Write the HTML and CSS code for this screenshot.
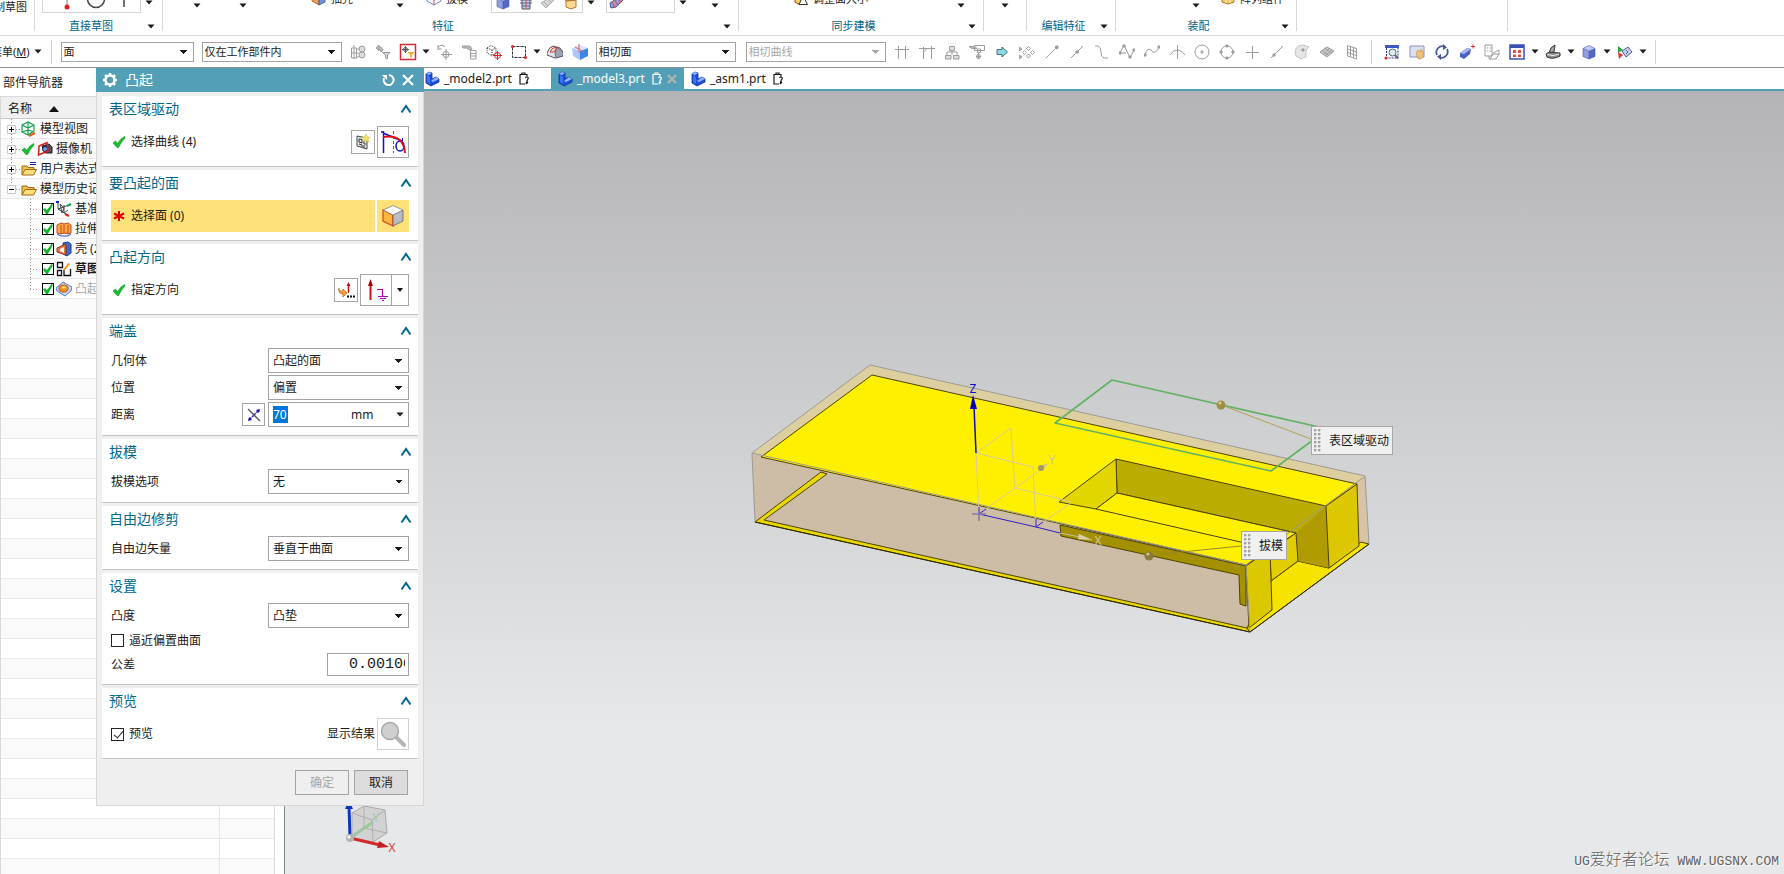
FILE: index.html
```
<!DOCTYPE html>
<html lang="zh-CN">
<head>
  <meta charset="UTF-8">
  <meta name="viewport" content="width=device-width, initial-scale=1.0">
  <title>_model3.prt</title>
  <link rel="stylesheet" href="styles.css">
</head>
<body>

  <!-- shared icons -->
  <svg class="sprite" aria-hidden="true">
    <symbol id="i-tick" viewBox="0 0 14 14"><path d="M1 8 L3.500 6 L5.500 8.500 Q8.500 3.500 12.500 1.500 L13 3 Q9 7 6.500 12.500 L5 12.500 Z" fill="#17c02c" stroke="#0b8a1d" stroke-width=".6"/></symbol>
    <symbol id="i-caret" viewBox="0 0 8 5"><path d="M0.500 0.500 H7.500 L4 4.500 Z" fill="#1a1a1a"/></symbol>
    <symbol id="i-chev" viewBox="0 0 12 10"><path d="M1.500 8.500 L6 2 L10.500 8.500" fill="none" stroke="#00668a" stroke-width="2"/></symbol>
    <symbol id="i-part" viewBox="0 0 16 16"><path d="M2 3 L5 1 L8 2 V8 L12 6 L15 8 V11 L7 15 L2 12 Z" fill="#1c50d8" stroke="#0b2b9a" stroke-width=".8"/><path d="M2 3 L5 1 L8 2 L5 4 Z M7 10 L12 6 L15 8 L9 11 Z" fill="#8db4ff"/><path d="M3 4 V11 L6 13 V6 Z" fill="#3a74f4"/></symbol>
    <symbol id="i-doc" viewBox="0 0 12 14"><path d="M9 4 V2.500 H2 V12 H7 M4 2.500 V1 H7 V2.500 M7.500 6 Q8 4.500 9.500 5 Q11 6 9.500 7.500 L8 12 M8 12 L10 10" fill="none" stroke="currentColor" stroke-width="1.200"/></symbol>
    <symbol id="i-cube" viewBox="0 0 16 16"><path d="M2 4.500 L8 7 V15 L2 12.500 Z" fill="#8f9fe0"/><path d="M8 7 L14 4.500 V12.500 L8 15 Z" fill="#5468c4"/><path d="M2 4.500 L8 1.500 L14 4.500 L8 7 Z" fill="#c3ccf6"/><path d="M2 4.500 L8 1.500 L14 4.500 V12.500 L8 15 L2 12.500 Z M2 4.500 L8 7 L14 4.500 M8 7 V15" fill="none" stroke="#4656a8" stroke-width=".6"/></symbol>
    <symbol id="i-folder" viewBox="0 0 16 16"><path d="M1 14 V5 H6 L7 6.500 H13 V9" fill="#f2c14a" stroke="#9b6a12"/><path d="M1 14 L4 8.500 H15.500 L12.500 14 Z" fill="#ffdf7a" stroke="#9b6a12"/></symbol>
    <symbol id="i-plus" viewBox="0 0 20 20"><path d="M10.500 0 V20 M15 10.500 H20" stroke="#999" stroke-dasharray="1 2"/><path d="M6.500 6.500 H14.500 V14.500 H6.500 Z" fill="#fff" stroke="#c8c8c8"/><path d="M8 10.500 H13 M10.500 8 V13" stroke="#000"/></symbol>
    <symbol id="i-minus" viewBox="0 0 20 20"><path d="M10.500 0 V6 M15 10.500 H20" stroke="#999" stroke-dasharray="1 2"/><path d="M6.500 6.500 H14.500 V14.500 H6.500 Z" fill="#fff" stroke="#c8c8c8"/><path d="M8 10.500 H13" stroke="#000"/></symbol>
    <symbol id="i-branch" viewBox="0 0 12 20"><path d="M.5 0 V20 M0 10.500 H9" stroke="#999" stroke-dasharray="1 2"/></symbol>
    <symbol id="i-branch-end" viewBox="0 0 12 20"><path d="M.5 0 V10 M0 10.500 H9" stroke="#999" stroke-dasharray="1 2"/></symbol>
  </svg>

  <header class="ribbon">
    <section class="group group-sketch">
      <button class="sketch-btn">绘制草图</button>
    </section>
    <section class="group group-direct">
      <div class="tools">
        <div class="gallery">
          <button aria-label="点"><svg width="16" height="16"><path d="M8 0 V12" stroke="#777"/><circle cx="8" cy="12" r="2.500" fill="#e02020"/></svg></button>
          <button aria-label="圆"><svg width="24" height="24"><circle cx="12" cy="12" r="8.500" fill="none" stroke="#444" stroke-width="1.500"/></svg></button>
          <button aria-label="十字"><svg width="16" height="16"><path d="M8 0 V12 M0 4 H16" stroke="#444" stroke-width="1.500"/></svg></button>
        </div>
        <button class="drop" aria-label="更多曲线"><svg width="8" height="5"><use href="#i-caret"/></svg></button>
      </div>
      <div class="group-name"><span>直接草图</span><svg width="8" height="5"><use href="#i-caret"/></svg></div>
    </section>
    <section class="group group-feature">
      <div class="tools">
        <button class="drop low" aria-label="下拉"><svg width="8" height="5"><use href="#i-caret"/></svg></button>
        <button class="drop low" aria-label="下拉"><svg width="8" height="5"><use href="#i-caret"/></svg></button>
        <button class="tool"><svg width="16" height="16"><path d="M1 7 L8 4 V15 L1 11 Z" fill="#f0a050" stroke="#8a4a1a" stroke-width=".7"/><path d="M8 3 L14 2 V12 L8 15 Z" fill="#6f8fe0" stroke="#334a90" stroke-width=".7"/></svg>抽壳</button>
        <button class="drop low" aria-label="下拉"><svg width="8" height="5"><use href="#i-caret"/></svg></button>
        <button class="tool"><svg width="16" height="16"><path d="M1 4 V11 L8 15 L15 11 V4" fill="#f6f6ff" stroke="#6a8ad8"/><path d="M8 6 V15 M8 6 L1 3 M8 6 L15 3" fill="none" stroke="#d05050"/></svg>拔模</button>
        <div class="gallery">
          <button aria-label="特征 1"><svg width="16" height="16"><use href="#i-cube"/></svg></button>
          <button aria-label="特征 2"><svg width="16" height="16"><path d="M4 1 H12 V15 H4 Z" fill="#c8cce0" stroke="#556"/><path d="M2 6 H14 M2 9 H14 M4 12 H12" stroke="#55608c"/><path d="M8 1 V15" stroke="#d44"/></svg></button>
          <button aria-label="特征 3"><svg width="16" height="16"><path d="M1 9 L12 2 L15 5 L6 14 Z" fill="#d4d4d4" stroke="#aaa"/><path d="M4 8 L8 12 M8 5 L12 9" stroke="#aaa"/></svg></button>
          <button aria-label="特征 4"><svg width="16" height="16"><path d="M3 7 L13 6 V13 L8 15 L3 13 Z" fill="#ffd890" stroke="#a9742a"/><path d="M3 7 L1 4 L8 3 L15 3 L13 6 Z" fill="#f2b44c" stroke="#a9742a"/></svg></button>
        </div>
        <button class="drop" aria-label="更多特征"><svg width="8" height="5"><use href="#i-caret"/></svg></button>
        <div class="gallery gallery-start">
          <button aria-label="阵列"><svg width="16" height="16"><path d="M1 9 L10 3 L15 5 L7 13 L2 14 Z" fill="#8fa4e6" stroke="#3d51a0"/><path d="M3 8 L6 14 M6 6 L9 12 M9 4 L12 9" stroke="#d05a5a" stroke-width="1.500"/></svg></button>
        </div>
        <button class="drop" aria-label="更多阵列"><svg width="8" height="5"><use href="#i-caret"/></svg></button>
        <button class="drop low" aria-label="下拉"><svg width="8" height="5"><use href="#i-caret"/></svg></button>
      </div>
      <div class="group-name"><span>特征</span><svg width="8" height="5"><use href="#i-caret"/></svg></div>
    </section>
    <section class="group group-sync">
      <div class="tools">
        <button class="tool"><svg width="16" height="16"><path d="M2 2 H8 V14 H5 L2 12 Z" fill="#ffd54a" stroke="#b03030"/><path d="M10 6 L14.500 14.500 H6 Z" fill="#fff" stroke="#333"/></svg>调整面大小</button>
        <button class="drop low" aria-label="下拉"><svg width="8" height="5"><use href="#i-caret"/></svg></button>
      </div>
      <div class="group-name"><span>同步建模</span><svg width="8" height="5"><use href="#i-caret"/></svg></div>
    </section>
    <section class="group group-more">
      <div class="tools">
        <button class="drop low" aria-label="更多"><svg width="8" height="5"><use href="#i-caret"/></svg></button>
      </div>
    </section>
    <section class="group group-edit">
      <div class="tools"></div>
      <div class="group-name"><span>编辑特征</span><svg width="8" height="5"><use href="#i-caret"/></svg></div>
    </section>
    <section class="group group-asm">
      <div class="tools">
        <button class="drop low" aria-label="下拉"><svg width="8" height="5"><use href="#i-caret"/></svg></button>
        <button class="tool"><svg width="16" height="16"><path d="M2 5 L8 2 L14 5 V12 L8 14 L2 12 Z" fill="#f4c862" stroke="#a9742a"/><path d="M6 3 V13 M10 3 V13 M2 8 H14" stroke="#fff3cf"/></svg>阵列组件</button>
      </div>
      <div class="group-name"><span>装配</span><svg width="8" height="5"><use href="#i-caret"/></svg></div>
    </section>
    <section class="group group-blank"></section>
  </header>

  <nav class="toolbar" aria-label="选择条">
    <button class="menu-btn">菜单(<u>M</u>)<svg width="8" height="5"><use href="#i-caret"/></svg></button>
    <span class="sep"></span>
    <select class="bar-select type-filter" aria-label="类型过滤器"><option>面</option></select>
    <select class="bar-select" aria-label="选择范围"><option>仅在工作部件内</option></select>
    <div class="icon-run left-run">
      <button aria-label="选择组"><svg width="16" height="16" class="grey"><path d="M1.500 4 H6.500 V14 H1.500 Z M4 1 V15 M1.500 9 H9 M6.500 5 H9 M6.500 13 H9"/><circle cx="12" cy="5" r="3" fill="#ddd"/><circle cx="12" cy="11" r="3" fill="#ddd"/></svg></button>
      <button aria-label="重置过滤器"><svg width="16" height="16" class="grey"><path d="M1 4 L4 1 V3 H6 L8 6 L6 8 L5 5 H4 V7 Z" fill="#bbb"/><path d="M7.500 8.500 H15 L12.500 11 V15 L10.500 14 V11 Z" fill="#d5d5d5"/></svg></button>
      <button aria-label="常规过滤器"><svg width="18" height="18"><path d="M1.500 1.500 H16.500 V16.500 H1.500 Z" fill="#fff" stroke="#cf2b3b" stroke-width="1.500"/><path d="M3 6.500 H10 M6.500 3 V10" stroke="#555"/><circle cx="6.500" cy="6.500" r="2" fill="none" stroke="#555"/><path d="M8.500 9 H15.500 L13 12 V15 L11 14 V12 Z" fill="#f4b02c"/></svg></button>
      <button class="narrow" aria-label="下拉"><svg width="8" height="5"><use href="#i-caret"/></svg></button>
      <button aria-label="撤销选择"><svg width="16" height="16" class="grey"><path d="M2 6 V1 M2 5 H6 M2 4 Q5 -1 9 3 M10 5 V16 M5 10.500 H16"/><circle cx="10" cy="10.500" r="3"/></svg></button>
      <button aria-label="选择链"><svg width="16" height="16" class="grey"><path d="M1 2 H9 L11 5 L8 6 L6 4 H2 Z" fill="#bbb"/><path d="M9.500 6.500 H15 V15 H9.500 Z M9.500 9.500 H15 M9.500 12 H15"/></svg></button>
      <button aria-label="选择对象"><svg width="16" height="16" fill="none"><path d="M1 4 L5 1.500 L10 4 V9 L6 12 L1 9 Z M1 4 L6 6 L10 4 M6 6 V11" stroke="#333" stroke-dasharray="1 1"/><circle cx="11.500" cy="11.500" r="3" stroke="#d22"/><path d="M7 11.500 H16 M11.500 7 V16" stroke="#d22"/></svg></button>
      <button aria-label="矩形选择"><svg width="16" height="16" fill="none"><path d="M1.500 2.500 H14.500 V13.500 H1.500 Z" stroke="#333" stroke-dasharray="3 1"/><circle cx="1.500" cy="2.500" r="1.500" fill="#d22"/><circle cx="14.500" cy="13.500" r="1.500" fill="#d22"/></svg></button>
      <button class="narrow" aria-label="下拉"><svg width="8" height="5"><use href="#i-caret"/></svg></button>
      <button aria-label="面规则"><svg width="16" height="16"><path d="M0 9 Q2 3 6 2 L13 4 L16 8 V12 L8 14 L0 11 Z" fill="#e2e4ea" stroke="#555"/><path d="M10 3 L16 8 V12 L9 14 L8 9 Z" fill="#9aa3b4" stroke="#667"/><path d="M3 8 L6 4 L10 3.500 L7 8 Z" fill="none" stroke="#d33"/></svg></button>
      <button aria-label="实体"><svg width="16" height="16"><path d="M0 4 L8 7 V16 L1 12 Z" fill="#a9c6ff"/><path d="M8 7 L16 4 V12 L8 16 Z" fill="#3c86e8"/><path d="M0 4 L8 1 L16 4 L8 7 Z" fill="#d3e2ff"/><path d="M7 0 V9 M3 3 L12 8" stroke="#e05a6a"/></svg></button>
    </div>
    <select class="bar-select" aria-label="面规则"><option>相切面</option></select>
    <select class="bar-select rule-curve" aria-label="曲线规则" disabled><option>相切曲线</option></select>
    <div class="icon-run">
      <button aria-label="在相交处停止"><svg width="16" height="16" class="grey"><path d="M4.500 2 V15 M11.500 2 V15 M1 5.500 H15"/></svg></button>
      <button aria-label="跟随圆角"><svg width="16" height="16" class="grey"><path d="M4.500 3 V15 M12.500 2 V15 M0 4.500 H16 M4.500 8 L8 4.500"/></svg></button>
      <button aria-label="特征链"><svg width="16" height="16" class="grey"><path d="M5.500 2.500 H10.500 V6.500 H5.500 Z M3 8 H13 M8 6.500 V11 M1.500 11.500 H7 V15 H1.500 Z M9.500 11.500 H15 V15 H9.500 Z M3 8 V11 M13 8 V11" fill="#ddd"/></svg></button>
      <button aria-label="路径选择"><svg width="16" height="16" class="grey"><path d="M0 2.500 H6 L8 4.500 H3 Z" fill="#bbb"/><path d="M5.500 1.500 H15.500 V6.500 H5.500 Z M8.500 5 H11.500 V8.500 H8.500 Z M9.500 8 V15 M7 12.500 H12"/><circle cx="9.500" cy="12.500" r="2"/></svg></button>
      <button aria-label="前进"><svg width="16" height="16"><path d="M3 5.500 H8 V3 L13.500 8 L8 13 V10.500 H3 Z" fill="#8fd8e0" stroke="#3e7482"/></svg></button>
      <button aria-label="捕捉点"><svg width="16" height="16" class="grey"><path d="M0 3 L3 5 L0 7 Z M0 11 L3 13 L0 15 Z" fill="#bbb"/><path d="M9.500 2.500 L11.500 4.500 L9.500 6.500 L7.500 4.500 Z M9.500 10 L11.500 12 L9.500 14 L7.500 12 Z M13.500 6.500 L15.500 8.500 L13.500 10.500 L11.500 8.500 Z M5.500 6.500 L7.500 8.500 L5.500 10.500 L3.500 8.500 Z"/></svg></button>
      <button aria-label="端点"><svg width="16" height="16" class="grey"><path d="M2 14 L13 3"/><path d="M11.500 2 H14 V4.500 H11.500 Z" fill="#999"/></svg></button>
      <button aria-label="中点"><svg width="16" height="16" class="grey"><path d="M2 14 L14 2"/><path d="M7 7 H9.500 V9 H7 Z" fill="#999"/></svg></button>
      <button aria-label="控制点"><svg width="16" height="16" class="grey"><path d="M1 2 H4 Q7 3 7 8 Q7 13 10 14 H14"/></svg></button>
      <button aria-label="极点"><svg width="16" height="16" class="grey"><path d="M1 9 L5 1 L11 14 L15 6 M1 9 H7"/><path d="M4 1 H6 V3 H4 Z M0 8 H2 V10 H0 Z M10 12 H12 V14 H10 Z M14 5 H16 V7 H14 Z" fill="#999"/></svg></button>
      <button aria-label="样条"><svg width="16" height="16" class="grey"><path d="M1 11 Q3 3 7 6 Q11 12 15 3"/><path d="M0 10 H2 V12 H0 Z M14 2 H16 V4 H14 Z" fill="#999"/></svg></button>
      <button aria-label="交点"><svg width="16" height="16" class="grey"><path d="M8.500 1 V15 M1 11 Q4 6 8.500 6 Q13 6 16 11"/></svg></button>
      <button aria-label="圆心"><svg width="16" height="16" class="grey"><circle cx="8" cy="8" r="7"/><path d="M6 8 H10 M8 6 V10"/></svg></button>
      <button aria-label="象限点"><svg width="16" height="16" class="grey"><circle cx="8" cy="8" r="6"/><path d="M7 1 H9 V3 H7 Z M7 13 H9 V15 H7 Z M1 7 H3 V9 H1 Z M13 7 H15 V9 H13 Z" fill="#aaa"/></svg></button>
      <button aria-label="现有点"><svg width="16" height="16" class="grey"><path d="M8.500 2 V15 M2 8.500 H15"/></svg></button>
      <button aria-label="曲线上的点"><svg width="16" height="16" class="grey"><path d="M2 14 L14 2"/><path d="M4 10 H6 V12 H4 Z" fill="#999"/></svg></button>
      <button aria-label="面上的点"><svg width="16" height="16" class="grey"><path d="M1 8 Q2 1 9 1 L15 3 Q11 6 12 13 Q9 13 8 15 L2 12 Z" fill="#e6e6e6" stroke="#c4c4c4"/><path d="M8 5 H10 V7 H8 Z" fill="#999"/></svg></button>
      <button aria-label="有界栅格"><svg width="16" height="16" class="grey"><path d="M1 8 L8 3 L15 7 L8 13 Z M3 6 L10 12 M5 4 L13 9 M4 11 L11 4 M6 12 L13 6" fill="#ccc"/></svg></button>
      <button aria-label="栅格"><svg width="16" height="16" class="grey"><path d="M3.500 1.500 L12.500 4.500 V15 L3.500 12 Z M6.500 3 V13 M9.500 4 V14 M3.500 5 L12.500 8 M3.500 8.500 L12.500 11.500"/></svg></button>
    </div>
    <span class="sep"></span>
    <div class="icon-run">
      <button aria-label="适合窗口"><svg width="16" height="16" fill="none"><path d="M1 1 H15 V4 H1 Z" fill="#3a56c8"/><path d="M2.500 4 V14 H14 V4" stroke="#2a3ba0" stroke-dasharray="2 1"/><circle cx="8.500" cy="8.500" r="3.500" fill="#dceef6" stroke="#667"/><path d="M11 11 L14 14.500" stroke="#667" stroke-width="2"/><circle cx="2" cy="14" r="1.500" fill="#d22"/></svg></button>
      <button aria-label="平移"><svg width="16" height="16"><path d="M1 2 H15 V13 H1 Z" fill="#d8e0f4" stroke="#8894b8"/><path d="M7 9 L9 6 L11 8 L12 5 L14 8 L15 12 L12 15 H9 Z" fill="#f0bf74" stroke="#b4813c" stroke-width=".5"/></svg></button>
      <button aria-label="旋转"><svg width="16" height="16" fill="none"><path d="M3 11 A6 6 0 0 1 10 2.500 M13 5 A6 6 0 0 1 6 13.500" stroke="#445a9a" stroke-width="1.800"/><path d="M9 0 L13 3.500 L9 6 Z M7 10 L3 12.500 L7 16 Z" fill="#445a9a"/></svg></button>
      <button aria-label="透视"><svg width="16" height="16"><path d="M1 9 L8 4 L12 5 L11 10 L5 15 L1 13 Z" fill="#4a62c4"/><path d="M1 9 L8 4 L12 5 L5 10 Z" fill="#aab8f0"/><path d="M12 2.500 H16 M14 .5 V4.500" stroke="#d33"/></svg></button>
      <button aria-label="替换视图"><svg width="16" height="16" class="grey"><path d="M1 1 H8 V12 H1 Z M3 4 H4 M5.500 4 H7 M3 7 H4 M5.500 7 H7 M5 12 V15 H12 L15 10 H9 L6 15 M9 9 L15 6 V10" /></svg></button>
      <button aria-label="布局"><svg width="16" height="16"><path d="M1 1 H15 V15 H1 Z" fill="#fff" stroke="#3a50b8" stroke-width="1.500"/><path d="M1 1 H15 V4 H1 Z" fill="#3a50b8"/><path d="M4 6 H7 V9 H4 Z M9 6 H12 V9 H9 Z M4 10.500 H7 V13 H4 Z M9 10.500 H12 V13 H9 Z" fill="#e64b3c"/></svg></button>
      <button class="narrow" aria-label="下拉"><svg width="8" height="5"><use href="#i-caret"/></svg></button>
      <button aria-label="渲染样式"><svg width="16" height="16"><path d="M4 9 Q5 3 10 1 L9 8 Z" fill="#aaa" stroke="#333"/><path d="M1 10 Q4 7 8 8.500 L15 9 V12 Q8 16 2 13 Z" fill="#8c8c8c" stroke="#333"/><path d="M2 10.500 Q8 13 14 10" fill="none" stroke="#eee"/></svg></button>
      <button class="narrow" aria-label="下拉"><svg width="8" height="5"><use href="#i-caret"/></svg></button>
      <button aria-label="定向视图"><svg width="16" height="16"><use href="#i-cube"/></svg></button>
      <button class="narrow" aria-label="下拉"><svg width="8" height="5"><use href="#i-caret"/></svg></button>
      <button aria-label="编辑截面"><svg width="16" height="16"><path d="M1 2 L6 6 L1 9 Z" fill="#26a83a"/><path d="M1 8 L6 11 L2 15 Z" fill="#d33"/><path d="M5 7 L11 3 L15 8 L9 13 Z" fill="#c4cef0" stroke="#55608c"/><path d="M9 6 L11 8 L9 10" fill="none" stroke="#55608c"/></svg></button>
      <button class="narrow" aria-label="下拉"><svg width="8" height="5"><use href="#i-caret"/></svg></button>
    </div>
    <span class="sep"></span>
  </nav>

  <main class="workspace">
    <aside class="navigator">
      <h2>部件导航器</h2>
      <div class="tree">
        <div class="tree-head"><span>名称</span><svg width="10" height="6"><path d="M0 6 L5 0 L10 6 Z" fill="#111"/></svg></div>
        <ul class="tree-rows">
          <li><svg width="20" height="20"><use href="#i-plus"/></svg><svg width="16" height="16" fill="none"><path d="M1 4 L7 1 L13 4 V10 L7 14 L1 11 Z M1 4 L7 7 L13 4 M7 7 V14 M7 1 V9 L1 11 M7 9 L13 11" stroke="#12a04a" stroke-width="1.200"/><path d="M8 15 L14 12" stroke="#e8541c" stroke-width="2"/></svg><span>模型视图</span></li>
          <li><svg width="20" height="20"><use href="#i-plus"/></svg><svg width="14" height="14"><use href="#i-tick"/></svg><svg width="16" height="16"><path d="M5 5 L12 3 L15 6 V12 L8 12 Z" fill="#4b4b6a" stroke="#222"/><circle cx="8" cy="8" r="2.500" fill="#7a9be8" stroke="#113"/><path d="M2 5 L10 1.500 L11 10 L1.500 14 Z" fill="none" stroke="#d8201c" stroke-width="1.500"/></svg><span>摄像机</span></li>
          <li><svg width="20" height="20"><use href="#i-plus"/></svg><svg width="16" height="16"><use href="#i-folder"/><path d="M9 1.500 H15 M9 3.500 H15" stroke="#20209a"/></svg><span>用户表达式</span></li>
          <li><svg width="20" height="20"><use href="#i-minus"/></svg><svg width="16" height="16"><use href="#i-folder"/></svg><span>模型历史记录</span></li>
          <li class="child"><svg width="12" height="20"><use href="#i-branch"/></svg><input type="checkbox" checked aria-label="基准坐标系"><svg width="16" height="16" fill="none"><path d="M2 1 V8 L10 13 M2 8 L13 4 M4 3 L8 7 L6 12 Z M8 4 V12 L12 9" stroke="#444"/><path d="M11 5 L15 3" stroke="#0a4" stroke-width="2"/><path d="M9 13 L13 15" stroke="#d22" stroke-width="2"/><path d="M0 1 H3" stroke="#22c" stroke-width="2"/></svg><span>基准坐标系</span></li>
          <li class="child"><svg width="12" height="20"><use href="#i-branch"/></svg><input type="checkbox" checked aria-label="拉伸"><svg width="16" height="16"><path d="M1 4 L5 2 L8 3 L12 2 L15 4 V12 L12 13 L8 12 L5 13 L1 12 Z" fill="#ffa64c" stroke="#c44a12"/><path d="M5 4 V13 M8 4 V12 M12 4 V13" stroke="#c44a12"/><path d="M1 13 L5 15 H12 L15 13" fill="none" stroke="#2a50c0"/></svg><span>拉伸</span></li>
          <li class="child"><svg width="12" height="20"><use href="#i-branch"/></svg><input type="checkbox" checked aria-label="壳"><svg width="16" height="16"><path d="M7 2 L12 1 L15 3 V12 L11 15 L7 13 Z" fill="#3d6ad0" stroke="#1c3a8c"/><path d="M1 7 L10 3 V14 L1 11 Z" fill="#e07840" stroke="#8a3510"/><path d="M4 8 L8 6 V12 L4 10 Z" fill="#fff"/></svg><span>壳 (2)</span></li>
          <li class="child strong"><svg width="12" height="20"><use href="#i-branch"/></svg><input type="checkbox" checked aria-label="草图"><svg width="16" height="16" fill="none"><path d="M1.500 1.500 H6.500 V6.500 H1.500 Z M1.500 9.500 H5.500 V14.500 H1.500 Z M8 9 V14.500 H14.500 V8" stroke="#111" stroke-width="1.300"/><path d="M8 9 L13 2.500" stroke="#e89a20" stroke-width="2"/></svg><span>草图 (3)</span></li>
          <li class="child faded"><svg width="12" height="20"><use href="#i-branch-end"/></svg><input type="checkbox" checked aria-label="凸起"><svg width="16" height="16"><path d="M0 7 L7 1 L16 6 L15 10 L9 15 L1 10 Z" fill="#c3d4f5" stroke="#5a7fc8"/><ellipse cx="7.500" cy="7.500" rx="4.500" ry="3.500" fill="#f7901e" stroke="#c8560c"/><ellipse cx="8" cy="6.500" rx="2" ry="1" fill="#ffe39a"/></svg><span>凸起</span></li>
        </ul>
      </div>
    </aside>

    <section class="view">
      <div class="tabs">
        <a class="tab" href="#"><svg width="16" height="16"><use href="#i-part"/></svg><span>_model2.prt</span><svg width="12" height="14"><use href="#i-doc"/></svg></a>
        <a class="tab active" href="#"><svg width="16" height="16"><use href="#i-part"/></svg><span>_model3.prt</span><svg width="12" height="14"><use href="#i-doc"/></svg><svg width="10" height="10"><path d="M1 1 L9 9 M9 1 L1 9" stroke="#b9b2ac" stroke-width="2"/></svg></a>
        <a class="tab" href="#"><svg width="16" height="16"><use href="#i-part"/></svg><span>_asm1.prt</span><svg width="12" height="14"><use href="#i-doc"/></svg></a>
      </div>

      <div class="canvas">
        <svg class="scene" role="img" aria-label="模型">
          <g transform="translate(-285 -91)" stroke-linejoin="round">
            <!-- translucent blank -->
            <path d="M870 365 L1365 476 L1246 565 L752 453 Z" fill="#ddcf9f"/>
            <path d="M752 453 L1246 565 L1250 632 L755 522 Z" fill="#cdbda7"/>
            <path d="M1365 476 L1369 544 L1250 632 L1246 565 Z" fill="#d8c3a6"/>
            <!-- base plate -->
            <g stroke="#4d4300" stroke-width="1">
              <path d="M755 522 L821 472 L827 474 L764 520 L1247 628 L1250 632 Z" fill="#ead900"/>
              <path d="M1271 581 L1298 561 L1329 568 L1361 542 L1369 544 L1250 632 L1247 628 Z" fill="#f6e300"/>
              <path d="M1060 525 L1246 566 V606 L1240 604 L1239 575 L1061 536 Z" fill="#a39100"/>
              <!-- top face -->
              <path d="M872 375 L1357 484 L1326 506 L1296 533 L1246 565 L761 457 Z" fill="#fff000"/>
              <!-- pocket -->
              <path d="M1116 459 L1326 506 L1329 568 L1298 561 L1296 533 L1117 493 Z" fill="#baac00"/>
              <path d="M1326 506 L1329 568 L1298 561 L1296 533 Z" fill="#b09c00" stroke="none"/>
              <path d="M1116 459 L1117 493 L1096 509 L1059 502 Z" fill="#e3d500"/>
              <path d="M1117 493 L1296 533 L1281 543 L1258 546 L1096 509 Z" fill="#fff000"/>
              <path d="M1326 506 L1357 484 L1359 546 L1329 568 Z" fill="#dcc700"/>
              <path d="M1270 551 L1296 533 L1298 561 L1271 581 Z" fill="#e1cd00"/>
              <path d="M1246 566 L1270 549 L1272 610 L1249 628 Z" fill="#dcc800"/>
            </g>
            <g fill="none" stroke="#9c9a94" stroke-width="1">
              <path d="M870 365 L1365 476 L1369 544 M1365 476 L1246 565 L752 453 L870 365 M752 453 L755 522 M1246 565 L1250 632"/>
            </g>
            <path d="M755 522 L1250 632 L1369 544" fill="none" stroke="#2d2800"/>
            <!-- datum csys -->
            <g fill="none" stroke="#d8ca98">
              <path d="M976 453 L1011 428 L1015 488 L979 514 Z M976 453 L1033 467 L1036 527 M1015 488 L1072 502 L1036 527 M1015 488 L1040 470"/>
            </g>
            <path d="M979 507 V514 L1036 527 L1060 533 M979 514 L986 509 M1036 519 V527 L1043 522" fill="none" stroke="#2a20c8"/>
            <path d="M972 514 H986 M979 507 V521" stroke="#8277a8" stroke-width="1.500"/>
            <path d="M976 453 L974 406" stroke="#0a0ad0" stroke-width="1.500"/>
            <path d="M973 395 L977 409 L970 409 Z" fill="#0000c8"/>
            <path d="M1060 533 L1080 537" stroke="#c9bf9a"/>
            <path d="M1079 534 L1092 540 L1078 539 Z" fill="#ddd0a8" stroke="#c7b98c" stroke-width=".5"/>
            <path d="M1039 466 L1049 463 L1043 470 Z" fill="#d0c494"/>
            <circle cx="1041" cy="468" r="3" fill="#a89860"/>
            <text x="973" y="393" class="axis axis-z">Z</text>
            <text x="1052" y="464" class="axis axis-y">Y</text>
            <text x="1098" y="545" class="axis axis-x">X</text>
            <!-- section curves and handles -->
            <path d="M1112 380 L1328 429 L1271 471 L1055 423 Z" fill="none" stroke="#62b262" stroke-width="1.700"/>
            <path d="M1224 406 L1311 439" stroke="#b59f5a"/>
            <path d="M1152 555 L1241 546" stroke="#9a8a28"/>
            <circle cx="1221" cy="405" r="4.500" fill="#a28c42"/>
            <circle cx="1220" cy="403" r="1.500" fill="#dccd92"/>
            <circle cx="1149" cy="556" r="4.500" fill="#8c7a3a"/>
            <circle cx="1148" cy="554" r="1.500" fill="#d6c78c"/>
            <!-- view triad -->
            <path d="M352 813 L364 806 L385 810 L387 833 L373 842 L352 838 Z" fill="#d2d2d2" stroke="#a8a8a8"/>
            <path d="M352 813 L372 820 L385 810 M372 820 L373 842 M364 806 V828 L387 833 M364 828 L352 838" fill="none" stroke="#b0b0b0"/>
            <path d="M350 838 L373 822" stroke="#9dc79f" stroke-width="3"/>
            <path d="M350 838 L349 806" stroke="#0a36c8" stroke-width="3"/>
            <path d="M349 800 L353 809 H345 Z" fill="#0a36c8"/>
            <path d="M350 838 L380 845" stroke="#d42a2a" stroke-width="3"/>
            <path d="M379 841 L389 847 L377 848 Z" fill="#c41f1f"/>
            <circle cx="350" cy="838" r="4" fill="#b4b4b4"/>
            <circle cx="349" cy="837" r="1.500" fill="#fff"/>
            <text x="376" y="822" class="axis triad-y">Y</text>
            <text x="392" y="852" class="axis triad-x">X</text>
          </g>
        </svg>
        <div class="tag tag-section">表区域驱动</div>
        <div class="tag tag-draft">拔模</div>
        <p class="watermark">UG<span>爱好者论坛</span> WWW.UGSNX.COM</p>
      </div>
    </section>
  </main>

  <form class="dialog">
    <div class="dialog-title">
      <svg width="16" height="16" fill="none"><circle cx="8" cy="8" r="4.500" stroke="#fff" stroke-width="2.500"/><path d="M8 1 V3 M8 13 V15 M1 8 H3 M13 8 H15 M3 3 L4.500 4.500 M11.500 11.500 L13 13 M13 3 L11.500 4.500 M3 13 L4.500 11.500" stroke="#fff" stroke-width="2.500"/></svg>
      <h1>凸起</h1>
      <button type="button" aria-label="重置"><svg width="14" height="14" fill="none"><path d="M8 2 A5 5 0 1 1 3 5" stroke="#fff" stroke-width="2"/><path d="M1 2 H6 V7 Z" fill="#fff"/></svg></button>
      <button type="button" aria-label="关闭"><svg width="14" height="14"><path d="M2 2 L12 12 M12 2 L2 12" stroke="#fff" stroke-width="2"/></svg></button>
    </div>

    <section class="panel">
      <h2>表区域驱动<svg width="12" height="10"><use href="#i-chev"/></svg></h2>
      <div class="row tall">
        <svg class="mark" width="14" height="14"><use href="#i-tick"/></svg>
        <span>选择曲线 (4)</span>
        <button type="button" class="small-btn" aria-label="绘制截面"><svg width="18" height="18" fill="none"><path d="M3 3 L13 5 V16 L3 13 Z" fill="#e8e8e0" stroke="#444"/><path d="M5 6 L8 6.500 V10 L5 9 Z M5 11 L8 12 V14 M10 8 V11 H12 M10 12 V15" stroke="#333"/><path d="M12 1 L13 4 L16 4 L14 6.500 L15 9 L12 7.500 L10 9 L10.500 6 L8 4 L11 4 Z" fill="#f2e65a" stroke="#c9b520" stroke-width=".5"/></svg></button>
        <button type="button" class="big-btn" aria-label="曲线"><svg width="26" height="26" fill="none"><path d="M3.500 2 V24 M1 3 H4 M3 4 L22 12" stroke="#1010d0" stroke-width="1.500"/><path d="M13.500 2 V24" stroke="#128080" stroke-dasharray="3 2"/><path d="M22.500 9 V15" stroke="#1010d0"/><ellipse cx="20" cy="17" rx="4" ry="5" stroke="#1010d0" stroke-width="1.500"/><path d="M3 8 Q24 5 25 24" stroke="#e01010" stroke-width="2"/></svg></button>
      </div>
    </section>

    <section class="panel">
      <h2>要凸起的面<svg width="12" height="10"><use href="#i-chev"/></svg></h2>
      <div class="row tall">
        <div class="picking">
          <svg class="mark" width="14" height="14"><path d="M7 2 V12 M2 4.500 L12 9.500 M12 4.500 L2 9.500" stroke="#e00000" stroke-width="2"/></svg>
          <span>选择面 (0)</span>
        </div>
        <button type="button" class="big-btn picked" aria-label="面"><svg width="24" height="24"><path d="M2 6 L12 11 V22 L2 17 Z" fill="#ffb63c" stroke="#e0481c" stroke-width="1.300"/><path d="M12 11 L22 6 V17 L12 22 Z" fill="#b9bcc2" stroke="#555" stroke-width=".7"/><path d="M2 6 L12 1.500 L22 6 L12 11 Z" fill="#fbfbfb" stroke="#777" stroke-width=".7"/></svg></button>
      </div>
    </section>

    <section class="panel">
      <h2>凸起方向<svg width="12" height="10"><use href="#i-chev"/></svg></h2>
      <div class="row tall">
        <svg class="mark" width="14" height="14"><use href="#i-tick"/></svg>
        <span>指定方向</span>
        <button type="button" class="small-btn" aria-label="矢量对话框"><svg width="18" height="18" fill="none"><path d="M11.500 3 V12" stroke="#b01818" stroke-width="1.500"/><path d="M11.500 1 L13.500 5 H9.500 Z" fill="#b01818"/><path d="M2 7 V10 H6 V8 L10 12 L6 16 V13 Q1 13 2 7 Z" fill="#ffa030" stroke="#b85a10" stroke-width=".7"/><path d="M10 15.500 H12 M13 15.500 H15 M16 15.500 H18" stroke="#111" stroke-width="2"/></svg></button>
        <div class="split">
          <button type="button" aria-label="自动判断的矢量"><svg width="28" height="28" fill="none"><path d="M8.500 7 V24" stroke="#c81414" stroke-width="2"/><path d="M8.500 3 L11 10 H6 Z" fill="#a80000"/><path d="M15 13.500 H20.500 V20 M16 20.500 H26 M18 22.500 H24 M20 24.500 H22" stroke="#b000b8" stroke-width="1.200"/></svg></button>
          <button type="button" class="arrow" aria-label="更多矢量"><svg width="6" height="4"><path d="M0 0 H6 L3 4 Z" fill="#111"/></svg></button>
        </div>
      </div>
    </section>

    <section class="panel">
      <h2>端盖<svg width="12" height="10"><use href="#i-chev"/></svg></h2>
      <div class="row"><label for="geom">几何体</label><select id="geom"><option>凸起的面</option></select></div>
      <div class="row"><label for="place">位置</label><select id="place"><option>偏置</option></select></div>
      <div class="row">
        <label for="dist">距离</label>
        <button type="button" class="flip-btn" aria-label="反向"><svg width="16" height="16"><path d="M2 2 L14 14" stroke="#555" stroke-width="1.300"/><path d="M4 12 L12 4" stroke="#2020a0" stroke-width="1.500" stroke-dasharray="2 1"/><path d="M14 2 L13 6 L10 3 Z M2 14 L3 10 L6 13 Z" fill="#1010a8"/></svg></button>
        <div class="measure"><input id="dist" type="text" value="70"><span>mm</span><svg width="8" height="5"><use href="#i-caret"/></svg></div>
      </div>
    </section>

    <section class="panel">
      <h2>拔模<svg width="12" height="10"><use href="#i-chev"/></svg></h2>
      <div class="row"><label for="draft">拔模选项</label><select id="draft"><option>无</option></select></div>
    </section>

    <section class="panel">
      <h2>自由边修剪<svg width="12" height="10"><use href="#i-chev"/></svg></h2>
      <div class="row"><label for="edge">自由边矢量</label><select id="edge"><option>垂直于曲面</option></select></div>
    </section>

    <section class="panel">
      <h2>设置<svg width="12" height="10"><use href="#i-chev"/></svg></h2>
      <div class="row"><label for="convex">凸度</label><select id="convex"><option>凸垫</option></select></div>
      <div class="row check-row"><label><input type="checkbox">逼近偏置曲面</label></div>
      <div class="row"><label for="tol">公差</label><input id="tol" class="tolerance" type="text" value="0.00100"></div>
    </section>

    <section class="panel">
      <h2>预览<svg width="12" height="10"><use href="#i-chev"/></svg></h2>
      <div class="row tall">
        <label><input type="checkbox" checked>预览</label>
        <span class="result">显示结果</span>
        <button type="button" class="big-btn dim" aria-label="显示结果"><svg width="26" height="26"><path d="M16 16 L24 24" stroke="#b5b5b5" stroke-width="4" stroke-linecap="round"/><circle cx="10" cy="10" r="8.500" fill="#cfcfcf" stroke="#a9a9a9" stroke-width="1.500"/></svg></button>
      </div>
    </section>

    <div class="dialog-foot">
      <button type="button" disabled>确定</button>
      <button type="button">取消</button>
    </div>
  </form>

</body>
</html>
```
FILE: styles.css
```
* {
  box-sizing: border-box;
}

body {
  margin: 0;
  height: 100vh;
  display: flex;
  flex-direction: column;
  position: relative;
  overflow: hidden;
  background: #fff;
  color: #1a1a1a;
  font-family: "Noto Sans", "Noto Sans CJK SC", sans-serif;
  font-size: 12px;
  line-height: 16px;
}

h1, h2, p, ul {
  margin: 0;
  padding: 0;
  font-weight: normal;
}

svg {
  flex-shrink: 0;
  display: block;
}

.sprite {
  position: absolute;
  width: 0;
  height: 0;
}

button, select, input {
  font: inherit;
  color: inherit;
  margin: 0;
  padding: 0;
  border: none;
  border-radius: 0;
  background: none;
}

.grey {
  fill: none;
  stroke: #9c9c9c;
}

/* ribbon */
.ribbon {
  display: flex;
  height: 36px;
  flex-shrink: 0;
  border-bottom: 1px solid #d9d9d9;
  font-size: 11px;
}

.group {
  height: 31px;
  flex-shrink: 0;
  border-right: 1px solid #d9d9d9;
  white-space: nowrap;
}

.group-sketch { width: 35px; overflow: hidden; }
.group-direct { width: 128px; }
.group-feature { width: 576px; }
.group-sync { width: 245px; }
.group-more { width: 43px; }
.group-edit { width: 89px; }
.group-asm { width: 181px; }
.group-blank { width: 211px; }

.sketch-btn {
  display: block;
  margin-left: -17px;
  line-height: 14px;
}

.tools {
  display: grid;
  grid-template-rows: 13px;
  align-items: end;
  height: 13px;
}

.group-direct .tools { grid-template-columns: 103px 1fr; padding-left: 7px; }
.group-feature .tools { grid-template-columns: 46px 72px 85px 30px 65px 96px 19px 73px 32px 1fr; padding-left: 30px; }
.group-sync .tools { grid-template-columns: 164px 1fr; padding-left: 54px; }
.group-more .tools { padding-left: 17px; }
.group-asm .tools { grid-template-columns: 28px 1fr; padding-left: 76px; }

.gallery {
  display: flex;
  justify-content: space-around;
  align-items: flex-end;
  height: 20px;
  padding-bottom: 2px;
  border: 1px solid #d4d4d4;
  margin-right: 4px;
}

.gallery-start {
  justify-content: flex-start;
  padding-left: 2px;
}

.group-direct .gallery {
  justify-content: space-between;
  padding: 0 8px 0 16px;
}

.group-direct .gallery button {
  padding-bottom: 1px;
}

.drop {
  justify-self: start;
  padding-bottom: 8px;
}

.drop.low {
  padding-bottom: 5px;
}

.tool {
  display: flex;
  align-items: flex-end;
  gap: 4px;
  justify-self: start;
  line-height: 14px;
  padding-bottom: 7px;
}

.group-name {
  display: flex;
  align-items: center;
  height: 12px;
  margin-top: 7px;
  padding-right: 7px;
  color: #00668a;
}

.group-name span {
  flex: 1;
  text-align: center;
}

/* selection bar */
.toolbar {
  display: flex;
  align-items: center;
  height: 32px;
  flex-shrink: 0;
  border-bottom: 1px solid #8a9292;
  font-size: 11px;
}

.menu-btn {
  display: flex;
  align-items: center;
  flex-shrink: 0;
  margin-left: -9px;
  margin-right: 5px;
  white-space: nowrap;
}

.menu-btn svg {
  margin-left: 4px;
}

.sep {
  width: 1px;
  height: 24px;
  margin: 0 8px 0 6px;
  background: #d4d4d4;
}

.menu-btn + .sep {
  margin-left: 4px;
  margin-right: 9px;
}

select {
  appearance: none;
  border: 1px solid #a3a3a3;
  background-color: #fff;
  background-image:
    linear-gradient(to bottom left, #1a1a1a 50%, transparent 50%),
    linear-gradient(to bottom right, #1a1a1a 50%, transparent 50%);
  background-size: 4px 4px;
  background-position: right 9px center, right 5px center;
  background-repeat: no-repeat;
}

.bar-select {
  width: 140px;
  height: 20px;
  padding-left: 2px;
  margin-right: 10px;
}

.bar-select.type-filter {
  width: 133px;
  margin-right: 8px;
}

.bar-select + .left-run {
  margin-left: -6px;
  margin-right: 3px;
}

.bar-select:disabled {
  color: #a8a8a8;
  opacity: 1;
  background-image:
    linear-gradient(to bottom left, #a8a8a8 50%, transparent 50%),
    linear-gradient(to bottom right, #a8a8a8 50%, transparent 50%);
}

.bar-select.rule-curve {
  margin-right: 4px;
}

.icon-run {
  display: flex;
  align-items: center;
}

.icon-run button {
  display: flex;
  justify-content: center;
  align-items: center;
  width: 25px;
  height: 24px;
}

.icon-run .narrow {
  width: 11px;
}

/* part navigator */
.workspace {
  flex: 1;
  min-height: 0;
  display: flex;
}

.navigator {
  width: 285px;
  flex-shrink: 0;
  display: flex;
  flex-direction: column;
  padding-right: 9px;
  border-right: 1px solid #7d8788;
}

.navigator h2 {
  height: 28px;
  padding-left: 3px;
  font-size: 12px;
  line-height: 30px;
}

.tree {
  flex: 1;
  display: flex;
  flex-direction: column;
  border: 1px solid #d9d9d9;
  border-bottom: none;
}

.tree-head {
  display: flex;
  align-items: center;
  gap: 17px;
  height: 22px;
  padding-left: 7px;
  padding-top: 2px;
  border-bottom: 1px solid #c9c9c9;
  background: #f0f0f0;
}

.tree-rows {
  flex: 1;
  list-style: none;
  background:
    linear-gradient(#e6e6e6, #e6e6e6) 218px 0 / 1px 100% no-repeat,
    repeating-linear-gradient(#fff 0 19px, #e9e9e9 19px 20px, #fafafa 20px 39px, #e9e9e9 39px 40px);
}

.tree-rows li {
  display: flex;
  align-items: center;
  height: 20px;
  gap: 2px;
  white-space: nowrap;
}

.tree-rows li > svg:first-child {
  margin-right: -2px;
}

.tree-rows .child {
  padding-left: 29px;
}

.tree-rows span {
  margin-left: 1px;
}

.strong {
  font-weight: bold;
}

.faded span {
  color: #a6a6a6;
}

.tree input {
  appearance: none;
  width: 12px;
  height: 12px;
  border: 1px solid #000;
  background: #fff;
}

.tree input:checked::after {
  content: "";
  display: block;
  width: 10px;
  height: 10px;
  background: #10b428;
  clip-path: polygon(0 55%, 20% 40%, 38% 62%, 85% 0, 100% 10%, 48% 100%, 32% 100%);
}

/* view tabs */
.view {
  flex: 1;
  min-width: 0;
  display: flex;
  flex-direction: column;
}

.tabs {
  display: flex;
  height: 23px;
  flex-shrink: 0;
  padding-left: 133px;
  border-bottom: 2px solid #539fb8;
}

.tab {
  display: flex;
  align-items: center;
  gap: 4px;
  width: 133px;
  padding-left: 6px;
  color: #1a1a1a;
  text-decoration: none;
}

.tab span {
  margin-right: 2px;
}

.tab.active {
  background: #539fb8;
  color: #fff;
}

/* graphics window */
.canvas {
  flex: 1;
  min-height: 0;
  position: relative;
  background: linear-gradient(#b4b4b6, #e6e8e9 82%);
}

.scene {
  position: absolute;
  width: 100%;
  height: 100%;
}

.axis {
  font-size: 12px;
  text-anchor: middle;
}

.axis-z { fill: #0a0ae0; }
.axis-y { fill: #c9c3a8; }
.axis-x { fill: #cfc59c; }
.triad-y { fill: #a4c9a6; }
.triad-x { fill: #d84040; }

.tag {
  position: absolute;
  display: flex;
  align-items: center;
  gap: 7px;
  height: 29px;
  padding: 0 3px 0 2px;
  border: 1px solid #a6a6a6;
  background: #f0f0f0;
}

.tag::before {
  content: "";
  width: 8px;
  height: 24px;
  background: radial-gradient(circle at 1px 1px, #a3a3a3 1px, transparent 2px) 0 0 / 4px 4px;
}

.tag-section { left: 1026px; top: 335px; }
.tag-draft { left: 956px; top: 440px; }

.watermark {
  position: absolute;
  right: 5px;
  bottom: 3px;
  color: #606060;
  font-family: "Liberation Mono", "Noto Sans CJK SC", monospace;
  font-size: 13px;
  line-height: 18px;
  text-shadow: 1px 1px 0 #fff;
}

.watermark span {
  font-size: 16px;
  font-family: "Noto Sans CJK SC", sans-serif;
  font-weight: 300;
}

/* dialog */
.dialog {
  position: absolute;
  left: 96px;
  top: 68px;
  width: 328px;
  display: flex;
  flex-direction: column;
  gap: 3px;
  border: 1px solid #d6d6d6;
  border-top: none;
  background: #efefef;
}

.dialog-title {
  display: flex;
  align-items: center;
  gap: 6px;
  height: 24px;
  margin: 0 -1px 1px;
  padding: 0 9px 0 6px;
  background: #539fb8;
  color: #fff;
}

.dialog-title h1 {
  flex: 1;
  font-size: 14px;
  padding-left: 1px;
}

.panel {
  display: flex;
  flex-direction: column;
  gap: 2px;
  margin: 0 5px;
  padding: 0 9px 8px;
  border-bottom: 1px solid #c4c4c4;
  background: #fff;
}

.panel h2 {
  display: flex;
  justify-content: space-between;
  align-items: center;
  height: 26px;
  margin: 0 -3px 2px -2px;
  color: #00668a;
  font-size: 14px;
}

.row {
  display: flex;
  align-items: center;
  gap: 2px;
  min-height: 23px;
}

.row.tall {
  height: 32px;
}

.row > label,
.row > span:not(.result) {
  flex: 1;
}

.mark {
  margin: 0 3px 0 1px;
}

.row label {
  display: flex;
  align-items: center;
  gap: 5px;
}

.row.check-row {
  min-height: 21px;
}

.row select,
.measure {
  width: 141px;
  height: 25px;
  padding-left: 4px;
}

.measure {
  display: flex;
  align-items: center;
  padding-right: 4px;
  border: 1px solid #a3a3a3;
  background: #fff;
}

.measure input {
  width: 15px;
  height: 17px;
  margin-right: 63px;
  background: #0078d7;
  color: #fff;
}

.measure span {
  flex: 1;
}

.tolerance {
  width: 82px;
  height: 23px;
  padding: 0 3px 0 21px;
  border: 1px solid #a3a3a3;
  background: #fff;
  font-family: "Liberation Mono", monospace;
  font-size: 15px;
}

.row input[type="checkbox"] {
  appearance: none;
  width: 13px;
  height: 13px;
  border: 1px solid #222;
  background: #fff;
}

.row input[type="checkbox"]:checked::after {
  content: "";
  display: block;
  width: 4px;
  height: 8px;
  margin-left: 4px;
  border: solid #222;
  border-width: 0 1px 1px 0;
  transform: rotate(40deg);
}

.small-btn, .big-btn, .flip-btn, .split {
  display: flex;
  justify-content: center;
  align-items: center;
  border: 1px solid #a6a6a6;
  background: #fff;
}

.small-btn {
  width: 24px;
  height: 24px;
}

.big-btn {
  width: 32px;
  height: 32px;
}

.flip-btn {
  width: 23px;
  height: 23px;
  margin-right: 1px;
}

.big-btn.picked {
  border-color: #ffe079;
  background: #ffe079;
}

.big-btn.dim {
  border-color: #d0d0d0;
}

.picking {
  flex: 1;
  display: flex;
  align-items: center;
  gap: 2px;
  height: 32px;
  background: #ffe079;
}

.split {
  height: 32px;
}

.split button {
  display: flex;
  align-items: center;
  justify-content: center;
  width: 30px;
  height: 30px;
}

.split .arrow {
  width: 17px;
  border-left: 1px solid #a6a6a6;
}

.dialog-foot {
  display: flex;
  justify-content: flex-end;
  gap: 5px;
  padding: 8px 15px 10px;
}

.dialog-foot button {
  width: 54px;
  height: 25px;
  border: 1px solid #a3a3a3;
  background: #dcdcdc;
}

.dialog-foot button:disabled {
  background: #efefef;
  color: #a6a6a6;
}
```
